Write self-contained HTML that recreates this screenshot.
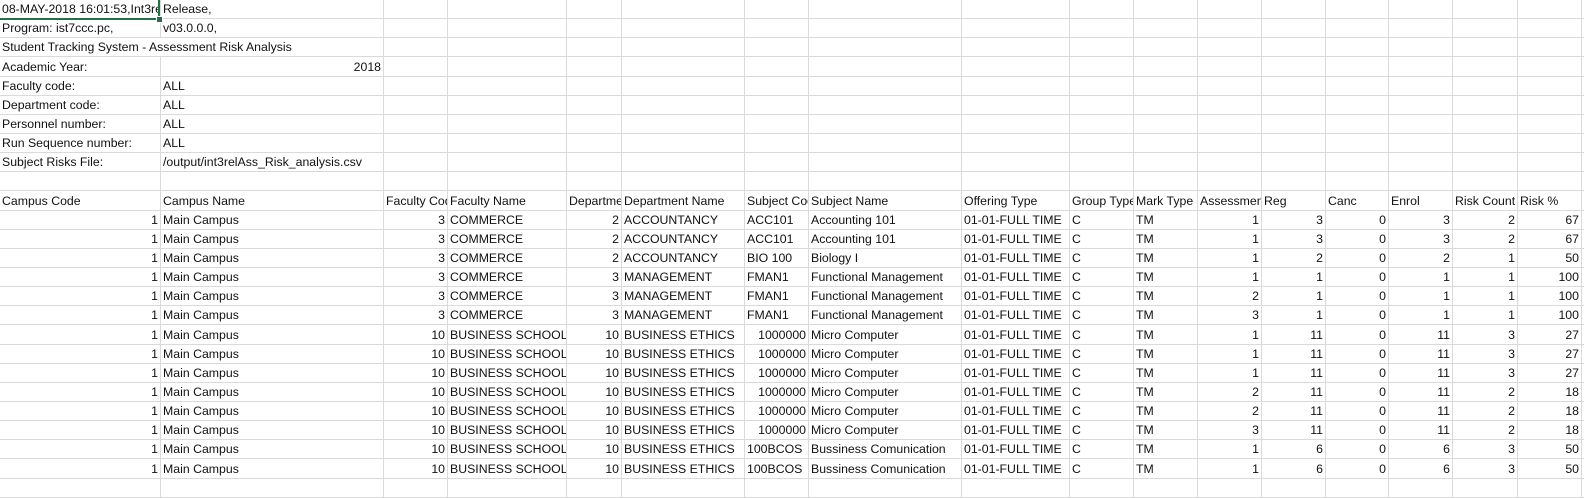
<!DOCTYPE html>
<html><head><meta charset="utf-8"><style>
html,body{margin:0;padding:0;background:#fff;width:1584px;height:485px;overflow:hidden}
table{border-collapse:collapse;table-layout:fixed;width:1592px;font-family:"Liberation Sans",sans-serif;font-size:12.3px;color:#111;position:absolute;left:-1px;top:-1px}
td{border:1px solid #dadada;height:18.15px;padding:0 2px;white-space:nowrap;overflow:hidden;vertical-align:bottom;line-height:17px;box-sizing:border-box}
tr{height:19.15px}
.r{text-align:right}
#sel{position:absolute;left:0;top:0;width:158px;height:18px;border-right:2px solid #217346;border-bottom:2px solid #217346}
#h{position:absolute;left:156px;top:16px;width:5px;height:5px;background:#217346;border:1px solid #fff}
</style></head><body>
<table>
<colgroup><col style="width:161px"><col style="width:223px"><col style="width:64px"><col style="width:119px"><col style="width:55px"><col style="width:123px"><col style="width:64px"><col style="width:153px"><col style="width:108px"><col style="width:64px"><col style="width:64px"><col style="width:64px"><col style="width:64px"><col style="width:63px"><col style="width:64px"><col style="width:65px"><col style="width:64px"><col style="width:10px"></colgroup>
<tr><td>08-MAY-2018 16:01:53,Int3relAss</td><td>Release,</td><td></td><td></td><td></td><td></td><td></td><td></td><td></td><td></td><td></td><td></td><td></td><td></td><td></td><td></td><td></td><td></td></tr>
<tr><td>Program: ist7ccc.pc,</td><td>v03.0.0.0,</td><td></td><td></td><td></td><td></td><td></td><td></td><td></td><td></td><td></td><td></td><td></td><td></td><td></td><td></td><td></td><td></td></tr>
<tr><td colspan="2">Student Tracking System - Assessment Risk Analysis</td><td></td><td></td><td></td><td></td><td></td><td></td><td></td><td></td><td></td><td></td><td></td><td></td><td></td><td></td><td></td></tr>
<tr><td>Academic Year:</td><td class="r">2018</td><td></td><td></td><td></td><td></td><td></td><td></td><td></td><td></td><td></td><td></td><td></td><td></td><td></td><td></td><td></td><td></td></tr>
<tr><td>Faculty code:</td><td>ALL</td><td></td><td></td><td></td><td></td><td></td><td></td><td></td><td></td><td></td><td></td><td></td><td></td><td></td><td></td><td></td><td></td></tr>
<tr><td>Department code:</td><td>ALL</td><td></td><td></td><td></td><td></td><td></td><td></td><td></td><td></td><td></td><td></td><td></td><td></td><td></td><td></td><td></td><td></td></tr>
<tr><td>Personnel number:</td><td>ALL</td><td></td><td></td><td></td><td></td><td></td><td></td><td></td><td></td><td></td><td></td><td></td><td></td><td></td><td></td><td></td><td></td></tr>
<tr><td>Run Sequence number:</td><td>ALL</td><td></td><td></td><td></td><td></td><td></td><td></td><td></td><td></td><td></td><td></td><td></td><td></td><td></td><td></td><td></td><td></td></tr>
<tr><td>Subject Risks File:</td><td>/output/int3relAss_Risk_analysis.csv</td><td></td><td></td><td></td><td></td><td></td><td></td><td></td><td></td><td></td><td></td><td></td><td></td><td></td><td></td><td></td><td></td></tr>
<tr><td></td><td></td><td></td><td></td><td></td><td></td><td></td><td></td><td></td><td></td><td></td><td></td><td></td><td></td><td></td><td></td><td></td><td></td></tr>
<tr><td>Campus Code</td><td>Campus Name</td><td>Faculty Code</td><td>Faculty Name</td><td>Department Code</td><td>Department Name</td><td>Subject Code</td><td>Subject Name</td><td>Offering Type</td><td>Group Type</td><td>Mark Type</td><td>Assessment</td><td>Reg</td><td>Canc</td><td>Enrol</td><td>Risk Count</td><td>Risk %</td><td></td></tr>
<tr><td class="r">1</td><td>Main Campus</td><td class="r">3</td><td>COMMERCE</td><td class="r">2</td><td>ACCOUNTANCY</td><td>ACC101</td><td>Accounting 101</td><td>01-01-FULL TIME</td><td>C</td><td>TM</td><td class="r">1</td><td class="r">3</td><td class="r">0</td><td class="r">3</td><td class="r">2</td><td class="r">67</td><td></td></tr>
<tr><td class="r">1</td><td>Main Campus</td><td class="r">3</td><td>COMMERCE</td><td class="r">2</td><td>ACCOUNTANCY</td><td>ACC101</td><td>Accounting 101</td><td>01-01-FULL TIME</td><td>C</td><td>TM</td><td class="r">1</td><td class="r">3</td><td class="r">0</td><td class="r">3</td><td class="r">2</td><td class="r">67</td><td></td></tr>
<tr><td class="r">1</td><td>Main Campus</td><td class="r">3</td><td>COMMERCE</td><td class="r">2</td><td>ACCOUNTANCY</td><td>BIO 100</td><td>Biology I</td><td>01-01-FULL TIME</td><td>C</td><td>TM</td><td class="r">1</td><td class="r">2</td><td class="r">0</td><td class="r">2</td><td class="r">1</td><td class="r">50</td><td></td></tr>
<tr><td class="r">1</td><td>Main Campus</td><td class="r">3</td><td>COMMERCE</td><td class="r">3</td><td>MANAGEMENT</td><td>FMAN1</td><td>Functional Management</td><td>01-01-FULL TIME</td><td>C</td><td>TM</td><td class="r">1</td><td class="r">1</td><td class="r">0</td><td class="r">1</td><td class="r">1</td><td class="r">100</td><td></td></tr>
<tr><td class="r">1</td><td>Main Campus</td><td class="r">3</td><td>COMMERCE</td><td class="r">3</td><td>MANAGEMENT</td><td>FMAN1</td><td>Functional Management</td><td>01-01-FULL TIME</td><td>C</td><td>TM</td><td class="r">2</td><td class="r">1</td><td class="r">0</td><td class="r">1</td><td class="r">1</td><td class="r">100</td><td></td></tr>
<tr><td class="r">1</td><td>Main Campus</td><td class="r">3</td><td>COMMERCE</td><td class="r">3</td><td>MANAGEMENT</td><td>FMAN1</td><td>Functional Management</td><td>01-01-FULL TIME</td><td>C</td><td>TM</td><td class="r">3</td><td class="r">1</td><td class="r">0</td><td class="r">1</td><td class="r">1</td><td class="r">100</td><td></td></tr>
<tr><td class="r">1</td><td>Main Campus</td><td class="r">10</td><td>BUSINESS SCHOOL</td><td class="r">10</td><td>BUSINESS ETHICS</td><td class="r">1000000</td><td>Micro Computer</td><td>01-01-FULL TIME</td><td>C</td><td>TM</td><td class="r">1</td><td class="r">11</td><td class="r">0</td><td class="r">11</td><td class="r">3</td><td class="r">27</td><td></td></tr>
<tr><td class="r">1</td><td>Main Campus</td><td class="r">10</td><td>BUSINESS SCHOOL</td><td class="r">10</td><td>BUSINESS ETHICS</td><td class="r">1000000</td><td>Micro Computer</td><td>01-01-FULL TIME</td><td>C</td><td>TM</td><td class="r">1</td><td class="r">11</td><td class="r">0</td><td class="r">11</td><td class="r">3</td><td class="r">27</td><td></td></tr>
<tr><td class="r">1</td><td>Main Campus</td><td class="r">10</td><td>BUSINESS SCHOOL</td><td class="r">10</td><td>BUSINESS ETHICS</td><td class="r">1000000</td><td>Micro Computer</td><td>01-01-FULL TIME</td><td>C</td><td>TM</td><td class="r">1</td><td class="r">11</td><td class="r">0</td><td class="r">11</td><td class="r">3</td><td class="r">27</td><td></td></tr>
<tr><td class="r">1</td><td>Main Campus</td><td class="r">10</td><td>BUSINESS SCHOOL</td><td class="r">10</td><td>BUSINESS ETHICS</td><td class="r">1000000</td><td>Micro Computer</td><td>01-01-FULL TIME</td><td>C</td><td>TM</td><td class="r">2</td><td class="r">11</td><td class="r">0</td><td class="r">11</td><td class="r">2</td><td class="r">18</td><td></td></tr>
<tr><td class="r">1</td><td>Main Campus</td><td class="r">10</td><td>BUSINESS SCHOOL</td><td class="r">10</td><td>BUSINESS ETHICS</td><td class="r">1000000</td><td>Micro Computer</td><td>01-01-FULL TIME</td><td>C</td><td>TM</td><td class="r">2</td><td class="r">11</td><td class="r">0</td><td class="r">11</td><td class="r">2</td><td class="r">18</td><td></td></tr>
<tr><td class="r">1</td><td>Main Campus</td><td class="r">10</td><td>BUSINESS SCHOOL</td><td class="r">10</td><td>BUSINESS ETHICS</td><td class="r">1000000</td><td>Micro Computer</td><td>01-01-FULL TIME</td><td>C</td><td>TM</td><td class="r">3</td><td class="r">11</td><td class="r">0</td><td class="r">11</td><td class="r">2</td><td class="r">18</td><td></td></tr>
<tr><td class="r">1</td><td>Main Campus</td><td class="r">10</td><td>BUSINESS SCHOOL</td><td class="r">10</td><td>BUSINESS ETHICS</td><td>100BCOS</td><td>Bussiness Comunication</td><td>01-01-FULL TIME</td><td>C</td><td>TM</td><td class="r">1</td><td class="r">6</td><td class="r">0</td><td class="r">6</td><td class="r">3</td><td class="r">50</td><td></td></tr>
<tr><td class="r">1</td><td>Main Campus</td><td class="r">10</td><td>BUSINESS SCHOOL</td><td class="r">10</td><td>BUSINESS ETHICS</td><td>100BCOS</td><td>Bussiness Comunication</td><td>01-01-FULL TIME</td><td>C</td><td>TM</td><td class="r">1</td><td class="r">6</td><td class="r">0</td><td class="r">6</td><td class="r">3</td><td class="r">50</td><td></td></tr>
<tr><td></td><td></td><td></td><td></td><td></td><td></td><td></td><td></td><td></td><td></td><td></td><td></td><td></td><td></td><td></td><td></td><td></td><td></td></tr>
</table>
<div id="sel"></div><div id="h"></div>
</body></html>
